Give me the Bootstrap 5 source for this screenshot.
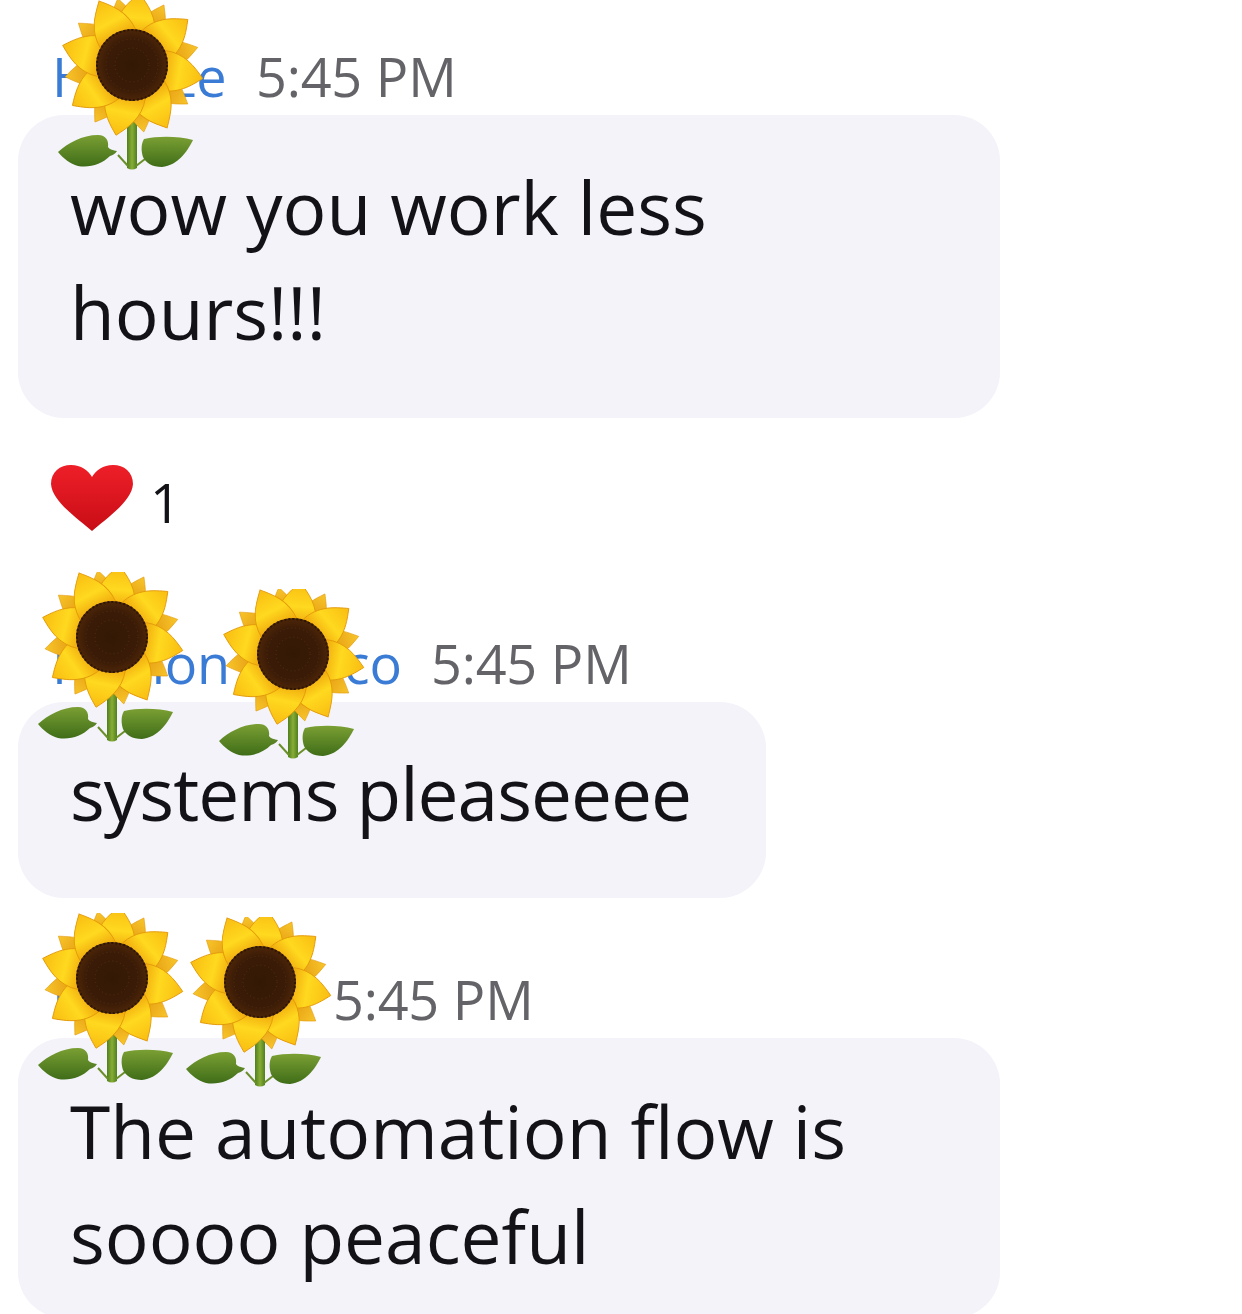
<!DOCTYPE html>
<html lang="en">
<head>
<meta charset="UTF-8">
<meta name="viewport" content="width=device-width, initial-scale=1.0">
<title>Chat</title>
<link href="https://cdn.jsdelivr.net/npm/bootstrap@5.3.1/dist/css/bootstrap.min.css" rel="stylesheet">
<style>
    html, body { margin: 0; height: 1314px; overflow: hidden; background: #fff; }
    body { font-family: "Open Sans", "Noto Sans", "Liberation Sans", sans-serif; color: #131217; }
    .chat-wrap { padding-left: 18px; }
    .msg-head { position: relative; height: 64px; padding-left: 34px; font-size: 54px; line-height: 60px; white-space: nowrap; letter-spacing: -.2px; }
    .msg-name { color: #3a7bd5; display: inline-block; }
    .msg-time { color: #636368; display: inline-block; }
    .bubble { background: #f3f3f9; border-radius: 46px; padding-left: 52px; font-size: 73px; line-height: 105px; }
    .head-one { margin-top: 46px; }
    .head-one .msg-name { width: 204px; }
    .head-two { margin-top: 47px; }
    .head-two .msg-name { width: 379px; }
    .head-three { margin-top: 71px; }
    .head-three .msg-name { width: 281px; }
    .bubble-one { width: 982px; height: 303px; margin-top: 5px; padding-top: 39px; }
    .bubble-two { width: 748px; height: 196px; margin-top: 5px; padding-top: 38px; letter-spacing: -1px; }
    .bubble-three { width: 982px; height: 280px; margin-top: 5px; padding-top: 40px; }
    .react-row { height: 122px; margin-top: 46px; padding-left: 32px; font-size: 54px; line-height: 68px; }
    .heart-ico { width: 84px; height: 68px; }
    .flower-ico { position: absolute; width: 150px; height: 172px; }
    .fl-a { left: 39px; top: -46px; }
    .fl-b { left: 19px; top: -61px; }
    .fl-c { left: 200px; top: -44px; }
    .fl-d { left: 19px; top: -56px; }
    .fl-e { left: 167px; top: -52px; }
</style>
</head>
<body>
<svg width="0" height="0" class="position-absolute">
    <defs>
        <linearGradient id="petalFront" x1="0" y1="0" x2="0" y2="1">
            <stop offset="0" stop-color="#f9bd12"/>
            <stop offset="0.55" stop-color="#ffd91f"/>
            <stop offset="1" stop-color="#eea20a"/>
        </linearGradient>
        <linearGradient id="petalBack" x1="0" y1="0" x2="0" y2="1">
            <stop offset="0" stop-color="#f8c52a"/>
            <stop offset="1" stop-color="#dc8a06"/>
        </linearGradient>
        <radialGradient id="discFill">
            <stop offset="0" stop-color="#331905"/>
            <stop offset="0.7" stop-color="#3a1b07"/>
            <stop offset="1" stop-color="#4d2608"/>
        </radialGradient>
        <linearGradient id="leafFill" x1="0" y1="0" x2="0" y2="1">
            <stop offset="0" stop-color="#7a9f33"/>
            <stop offset="1" stop-color="#3f6d18"/>
        </linearGradient>
        <linearGradient id="stemFill" x1="0" y1="0" x2="1" y2="0">
            <stop offset="0" stop-color="#4f7f1d"/>
            <stop offset="0.5" stop-color="#88ad35"/>
            <stop offset="1" stop-color="#4f7f1d"/>
        </linearGradient>
        <path id="petalBig" d="M1-72C10-62 21-50 20-30 13-26 5-28 0-28-5-28-13-26-20-30-21-50-9-62 1-72Z" fill="url(#petalFront)" stroke="#e39a0a" stroke-width=".9"/>
        <path id="petalSmall" d="M0-68C7-58 18-44 15-26L-15-26C-18-44-7-58 0-68Z" fill="url(#petalBack)" stroke="#e39a0a" stroke-width=".6"/>
        <symbol id="sunflower" viewBox="0 0 150 172">
            <g transform="translate(75 65)">
                <path d="M-5 50H5L5 103Q0 106-5 103Z" fill="url(#stemFill)"/>
                <path d="M-4 101L-14 90M4 101L13 94" stroke="#6b8f2a" stroke-width="2" fill="none"/>
                <path d="M-74 87C-64 78-50 70-34 70-26 70-23 76-24 82-22 85-19 85-15 86-17 89-19 90-22 91-30 99-42 103-54 101-62 99-69 93-74 87Z" fill="url(#leafFill)"/>
                <path d="M12 74C26 71 46 71 61 75 55 87 46 100 30 102 20 102 14 98 11 92 9 86 9 79 12 74Z" fill="url(#leafFill)"/>
                <g>
                    <use href="#petalSmall" transform="rotate(28)"/>
                    <use href="#petalSmall" transform="rotate(75)"/>
                    <use href="#petalSmall" transform="rotate(125)"/>
                    <use href="#petalSmall" transform="rotate(170)"/>
                    <use href="#petalSmall" transform="rotate(213)"/>
                    <use href="#petalSmall" transform="rotate(260)"/>
                    <use href="#petalSmall" transform="rotate(308)"/>
                    <use href="#petalSmall" transform="rotate(348)"/>
                </g>
                <g>
                    <use href="#petalBig" transform="rotate(5)"/>
                    <use href="#petalBig" transform="rotate(50)"/>
                    <use href="#petalBig" transform="rotate(100)"/>
                    <use href="#petalBig" transform="rotate(150)"/>
                    <use href="#petalBig" transform="rotate(192)"/>
                    <use href="#petalBig" transform="rotate(235)"/>
                    <use href="#petalBig" transform="rotate(285)"/>
                    <use href="#petalBig" transform="rotate(332)"/>
                </g>
                <circle r="36" fill="url(#discFill)"/>
                <circle r="35" fill="none" stroke="#2e1605" stroke-width="2" stroke-dasharray="2 2"/>
                <circle r="26" fill="none" stroke="#54300f" stroke-width="1" stroke-dasharray="1 3"/>
                <circle r="17" fill="none" stroke="#54300f" stroke-width="1" stroke-dasharray="1 3"/>
            </g>
        </symbol>
        <linearGradient id="heartFill" x1="0" y1="0" x2="0" y2="1">
            <stop offset="0" stop-color="#ee1f28"/>
            <stop offset="1" stop-color="#c80d16"/>
        </linearGradient>
    </defs>
</svg>

<div class="chat-wrap">
    <div class="msg-head head-one">
        <span class="msg-name">Hamze</span><span class="msg-time">5:45 PM</span>
        <svg class="flower-ico fl-a"><use href="#sunflower"/></svg>
    </div>
    <div class="bubble bubble-one">wow you work less<br>hours!!!</div>

    <div class="react-row d-flex align-items-start gap-3">
        <svg class="heart-ico" viewBox="0 0 84 68">
            <path d="M42 67C30 56 2 38 1 20 1 8 10 1 21 1 31 1 38 6 42 13 46 6 53 1 63 1 74 1 83 8 83 20 82 38 54 56 42 67Z" fill="url(#heartFill)"/>
        </svg>
        <span class="mt-1">1</span>
    </div>

    <div class="msg-head head-two">
        <span class="msg-name">Ramon Marco</span><span class="msg-time">5:45 PM</span>
        <svg class="flower-ico fl-b"><use href="#sunflower"/></svg>
        <svg class="flower-ico fl-c"><use href="#sunflower"/></svg>
    </div>
    <div class="bubble bubble-two">systems pleaseeee</div>

    <div class="msg-head head-three">
        <span class="msg-name">Ella</span><span class="msg-time">5:45 PM</span>
        <svg class="flower-ico fl-d"><use href="#sunflower"/></svg>
        <svg class="flower-ico fl-e"><use href="#sunflower"/></svg>
    </div>
    <div class="bubble bubble-three">The automation flow is<br>soooo peaceful</div>
</div>

<script src="https://cdn.jsdelivr.net/npm/bootstrap@5.3.1/dist/js/bootstrap.bundle.min.js"></script>
</body>
</html>
